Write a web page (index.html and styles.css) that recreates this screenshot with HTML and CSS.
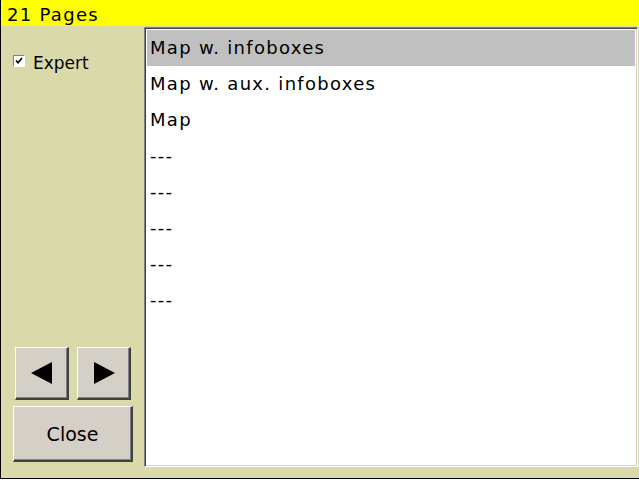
FILE: index.html
```html
<!DOCTYPE html>
<html>
<head>
<meta charset="utf-8">
<link rel="stylesheet" href="styles.css">
</head>
<body>
<div class="window">
  <div class="titlebar">21 Pages</div>
  <div class="main">
    <div class="side">
      <label class="expert">
        <span class="check"><svg width="8" height="8" viewBox="0 0 8 8"><path d="M1 3.5 L3 5.8 L7 1" fill="none" stroke="#000" stroke-width="1.6"/></svg></span>
        <span class="expert-label">Expert</span>
      </label>
      <div class="controls">
        <div class="arrows">
          <div class="btn arrow"><svg width="22" height="22" viewBox="0 0 22 22"><polygon points="0,11 21,0 21,22" fill="#000"/></svg></div>
          <div class="btn arrow"><svg width="22" height="22" viewBox="0 0 22 22"><polygon points="22,11 1,0 1,22" fill="#000"/></svg></div>
        </div>
        <div class="btn close">Close</div>
      </div>
    </div>
    <div class="list">
      <div class="row selected">Map w. infoboxes</div>
      <div class="row">Map w. aux. infoboxes</div>
      <div class="row">Map</div>
      <div class="row">---</div>
      <div class="row">---</div>
      <div class="row">---</div>
      <div class="row">---</div>
      <div class="row">---</div>
    </div>
  </div>
</div>
</body>
</html>
```
FILE: styles.css
```css
html, body {
  margin: 0;
  padding: 0;
  background: #ffffff;
}
body {
  font-family: "DejaVu Sans", sans-serif;
  color: #000;
}
.window {
  width: 639px;
  height: 478px;
  border-left: 1px solid #000;
  border-bottom: 1px solid #000;
  display: flex;
  flex-direction: column;
  background: #d9d9aa;
}
.titlebar {
  height: 26px;
  background: #ffff00;
  font-size: 18px;
  letter-spacing: 1.3px;
  line-height: 29px;
  padding-left: 6px;
}
.main {
  flex: 1;
  display: flex;
}
.side {
  width: 143px;
  display: flex;
  flex-direction: column;
  justify-content: space-between;
}
.expert {
  display: flex;
  align-items: center;
  margin-top: 27px;
  padding-left: 12px;
  font-size: 17px;
}
.check {
  width: 10px;
  height: 10px;
  background: #fff;
  border-top: 1px solid #808080;
  border-left: 1px solid #808080;
  border-right: 1px solid #fff;
  border-bottom: 1px solid #fff;
  display: flex;
  align-items: center;
  justify-content: center;
  margin-right: 8px;
  margin-top: -4px;
}
.controls {
  display: flex;
  flex-direction: column;
  gap: 6px;
  padding-bottom: 16px;
}
.arrows {
  display: flex;
  gap: 8px;
  padding-left: 14px;
}
.btn {
  background: #d4d0c8;
  box-sizing: border-box;
  border-top: 1px solid #ffffff;
  border-left: 1px solid #ffffff;
  border-right: 2px solid #404040;
  border-bottom: 2px solid #404040;
  box-shadow: inset -1px -1px 0 #808080;
  display: flex;
  align-items: center;
  justify-content: center;
}
.arrow {
  width: 54px;
  height: 53px;
}
.close {
  width: 120px;
  height: 56px;
  margin-left: 12px;
  font-size: 19px;
}
.list {
  box-sizing: border-box;
  width: 494px;
  height: 440px;
  margin-top: 1px;
  background: #fff;
  border-top: 1px solid #808080;
  border-left: 1px solid #808080;
  border-right: 1px solid #fff;
  border-bottom: 1px solid #fff;
  box-shadow: inset 1px 1px 0 #404040, inset -1px -1px 0 #d4d0c8;
  padding: 2px 2px 2px 2px;
}
.row {
  height: 36px;
  line-height: 36px;
  padding-left: 3px;
  font-size: 18px;
  letter-spacing: 1.3px;
  white-space: nowrap;
}
.row.selected {
  background: #c0c0c0;
}
```
